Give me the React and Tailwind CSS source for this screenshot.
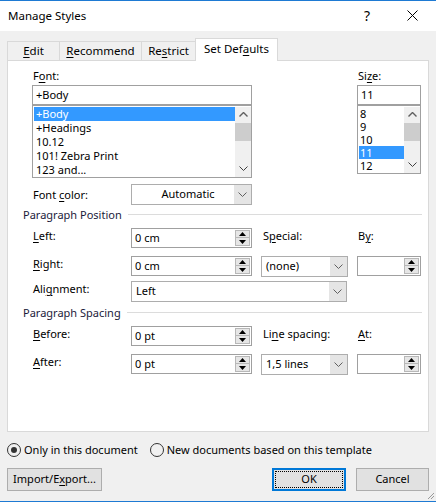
import React from 'react';

const U = ({ children }) => <span className="underline underline-offset-[2px] decoration-1">{children}</span>;

const ChevronDown = ({ color = '#606060' }) => (
  <svg width="9" height="5" viewBox="0 0 9 5">
    <path d="M0.5 0.5 L4.5 4.5 L8.5 0.5" fill="none" stroke={color} strokeWidth="1" />
  </svg>
);

const ChevronUp = ({ color = '#606060' }) => (
  <svg width="9" height="5" viewBox="0 0 9 5">
    <path d="M0.5 4.5 L4.5 0.5 L8.5 4.5" fill="none" stroke={color} strokeWidth="1.4" />
  </svg>
);

const Tri = ({ up }) => (
  <svg width="7" height="4" viewBox="0 0 7 4">
    <path d={up ? 'M0 4 L3.5 0 L7 4 Z' : 'M0 0 L3.5 4 L7 0 Z'} fill="#000" />
  </svg>
);

const SpinBox = ({ value, w }) => (
  <div className={`${w} h-[20px] border border-[#a0a0a0] bg-white flex items-center`}>
    <div className="flex-1 pl-[3px] leading-none">{value}</div>
    <div className="w-[15px] h-[16px] mr-px flex flex-col border border-[#b8b8b8] bg-[#e6e6e6]">
      <div className="flex-1 flex items-center justify-center border-b border-[#b8b8b8]"><Tri up /></div>
      <div className="flex-1 flex items-center justify-center"><Tri /></div>
    </div>
  </div>
);

const Combo = ({ value, w, center }) => (
  <div className={`${w} h-[21px] border border-[#adadad] bg-white flex`}>
    <div className={center ? 'flex-1 flex items-center justify-center pl-[10px]' : 'flex-1 flex items-center pl-[4px]'}>{value}</div>
    <div className="w-[17px] bg-[#e5e5e5] flex items-center justify-center"><ChevronDown /></div>
  </div>
);

const ScrollBar = ({ h }) => (
  <div className={`w-[16px] ${h} bg-[#f0f0f0] flex flex-col items-center`}>
    <div className="h-[16px] w-full flex items-center justify-center"><ChevronUp /></div>
    <div className="h-[18px] w-full bg-[#cdcdcd]" />
    <div className="flex-1" />
    <div className="h-[16px] w-full flex items-center justify-center"><ChevronDown color="#404040" /></div>
  </div>
);

const Label = ({ children, w = 'w-[99px]' }) => (
  <div className={`${w} h-[14px] pt-px pl-px leading-[14px]`}>{children}</div>
);

const Section = ({ title }) => (
  <div className="h-[14px] flex items-center pl-[15px] pr-[6px]">
    <span className="leading-[14px] text-[#1a1a3a]">{title}</span>
    <div className="flex-1 ml-[6px] h-px bg-[#dcdcdc]" />
  </div>
);

const Tab = ({ children, selected }) => (
  <div
    className={
      selected
        ? 'relative z-10 h-[23px] -mb-px bg-white border-l border-t border-r border-[#d9d9d9] flex items-center justify-center pb-[2px]'
        : 'h-[19px] bg-[#f0f0f0] border-l border-t border-[#d9d9d9] flex items-center justify-center'
    }
  >
    {children}
  </div>
);

export default function App() {
  const fonts = ['+Body', '+Headings', '10.12', '101! Zebra Print', '123 and...'];
  const sizes = ['8', '9', '10', '11', '12'];
  return (
    <div className="w-[436px] h-[502px] bg-[#f0f0f0] border-t border-b border-[#1e7ad3] flex flex-col text-[11px] text-black font-['Noto_Sans',sans-serif] overflow-hidden">
      {/* title bar */}
      <div className="h-[30px] bg-white flex items-center pl-[8px]">
        <span className="text-[11.5px]">Manage Styles</span>
        <div className="flex-1" />
        <span className="text-[14px] mr-[37px]">?</span>
        <svg width="11" height="11" viewBox="0 0 11 11" className="mr-[18px]">
          <path d="M0.5 0.5 L10.5 10.5 M10.5 0.5 L0.5 10.5" stroke="#000" strokeWidth="1" />
        </svg>
      </div>

      {/* tabs */}
      <div className="mt-[7px] h-[22px] px-[7px] flex items-end text-[11.5px]">
        <div className="w-[52px]"><Tab><U>E</U>dit</Tab></div>
        <div className="w-[82px]"><Tab><U>R</U>ecommend</Tab></div>
        <div className="w-[54px]"><Tab>Re<U>s</U>trict</Tab></div>
        <div className="w-[83px]"><Tab selected>Set Def<U>a</U>ults</Tab></div>
      </div>

      {/* panel */}
      <div className="mx-[7px] h-[374px] bg-white border border-[#d9d9d9] flex flex-col">
        <div className="mt-[7px] flex pl-[24px]">
          <div className="w-[220px] flex flex-col">
            <Label>F<U>o</U>nt:</Label>
            <div className="mt-[3px] h-[20px] border border-[#a0a0a0] flex items-center pl-[3px]">+Body</div>
            <div className="h-[73px] border border-[#a0a0a0] flex pt-px pl-px">
              <div className="flex-1 flex flex-col">
                {fonts.map((f, i) => (
                  <div key={f} className={i === 0 ? 'h-[14px] leading-[14px] pl-[2px] bg-[#3399ff] text-white' : 'h-[14px] leading-[14px] pl-[2px]'}>{f}</div>
                ))}
              </div>
              <ScrollBar h="h-[70px]" />
            </div>
          </div>
          <div className="ml-[105px] w-[64px] flex flex-col">
            <Label w="w-[64px]">Si<U>z</U>e:</Label>
            <div className="mt-[3px] h-[20px] border border-[#a0a0a0] flex items-center pl-[3px]">11</div>
            <div className="h-[69px] border border-[#a0a0a0] flex pt-px pl-px">
              <div className="flex-1 flex flex-col">
                {sizes.map((s) => (
                  <div key={s} className={s === '11' ? 'h-[13px] leading-[13px] pl-px bg-[#3399ff] text-white' : 'h-[13px] leading-[13px] pl-px'}>{s}</div>
                ))}
              </div>
              <ScrollBar h="h-[66px]" />
            </div>
          </div>
        </div>

        <div className="mt-[6px] flex items-center pl-[24px]">
          <Label>Font <U>c</U>olor:</Label>
          <Combo value="Automatic" w="w-[121px]" center />
        </div>

        <div className="mt-[3px]"><Section title="Paragraph Position" /></div>

        <div className="mt-[6px] flex items-start pl-[24px]">
          <Label><U>L</U>eft:</Label>
          <SpinBox value="0 cm" w="w-[121px]" />
          <div className="ml-[10px] w-[86px]"><Label w="w-[86px]">S<U>p</U>ecial:</Label></div>
          <div className="ml-[9px]"><Label w="w-[64px]">B<U>y</U>:</Label></div>
        </div>

        <div className="mt-[8px] flex items-start pl-[24px]">
          <Label><U>R</U>ight:</Label>
          <SpinBox value="0 cm" w="w-[121px]" />
          <div className="ml-[9px]"><Combo value="(none)" w="w-[87px]" /></div>
          <div className="ml-[9px]"><SpinBox value="" w="w-[64px]" /></div>
        </div>

        <div className="mt-[4px] flex items-start pl-[24px]">
          <Label>Ali<U>g</U>nment:</Label>
          <Combo value="Left" w="w-[216px]" />
        </div>

        <div className="mt-[4px]"><Section title="Paragraph Spacing" /></div>

        <div className="mt-[6px] flex items-start pl-[24px]">
          <Label><U>B</U>efore:</Label>
          <SpinBox value="0 pt" w="w-[121px]" />
          <div className="ml-[10px] w-[86px]"><Label w="w-[86px]">Li<U>n</U>e spacing:</Label></div>
          <div className="ml-[9px]"><Label w="w-[64px]"><U>A</U>t:</Label></div>
        </div>

        <div className="mt-[8px] flex items-start pl-[24px]">
          <Label><U>A</U>fter:</Label>
          <SpinBox value="0 pt" w="w-[121px]" />
          <div className="ml-[9px]"><Combo value="1,5 lines" w="w-[87px]" /></div>
          <div className="ml-[9px]"><SpinBox value="" w="w-[64px]" /></div>
        </div>
      </div>

      {/* radios */}
      <div className="mt-[10px] h-[16px] px-[7px] flex items-center">
        <div className="w-[14px] h-[14px] rounded-full border border-[#333] flex items-center justify-center">
          <div className="w-[6px] h-[6px] rounded-full bg-[#333]" />
        </div>
        <span className="ml-[3px]">Only in this document</span>
        <div className="ml-[12px] w-[14px] h-[14px] rounded-full border border-[#333]" />
        <span className="ml-[3px]">New documents based on this template</span>
      </div>

      {/* buttons */}
      <div className="mt-[10px] px-[7px] flex items-center">
        <div className="w-[95px] h-[23px] bg-[#e1e1e1] border border-[#adadad] flex items-center justify-center">Import/E<U>x</U>port...</div>
        <div className="flex-1" />
        <div className="w-[74px] h-[23px] bg-[#e1e1e1] border-2 border-[#0078d7] p-px">
          <div className="w-full h-full border border-dotted border-black flex items-center justify-center">OK</div>
        </div>
        <div className="ml-[10px] w-[73px] h-[23px] bg-[#e1e1e1] border border-[#adadad] flex items-center justify-center">Cancel</div>
      </div>

      <div className="flex-1 flex justify-end items-end pr-px pb-px">
        <svg width="9" height="9" viewBox="0 0 9 9">
          <path d="M8 2 L2 8 M8 5 L5 8" stroke="#9a9a9a" strokeWidth="1" />
        </svg>
      </div>
    </div>
  );
}
